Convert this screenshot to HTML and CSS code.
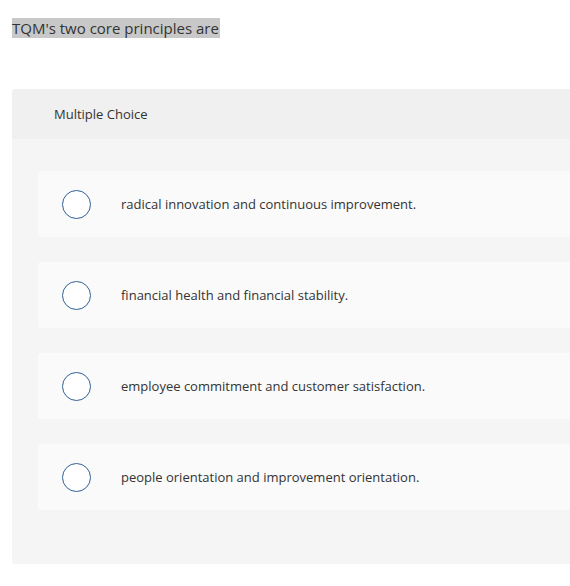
FILE: index.html
```html
<!DOCTYPE html>
<html lang="en">
<head>
    <meta charset="UTF-8">
    <meta name="viewport" content="width=device-width, initial-scale=1.0">
    <title>Multiple Choice</title>
    <link rel="stylesheet" href="styles.css">
</head>
<body>
    <div class="prompt">
        <span class="prompt-text">TQM's two core principles are</span>
    </div>

    <div class="question">
        <div class="question-header">Multiple Choice</div>
        <div class="choices">
            <label class="choice">
                <span class="radio"></span>
                <span class="choice-text">radical innovation and continuous improvement.</span>
            </label>
            <label class="choice">
                <span class="radio"></span>
                <span class="choice-text">financial health and financial stability.</span>
            </label>
            <label class="choice">
                <span class="radio"></span>
                <span class="choice-text">employee commitment and customer satisfaction.</span>
            </label>
            <label class="choice">
                <span class="radio"></span>
                <span class="choice-text">people orientation and improvement orientation.</span>
            </label>
        </div>
    </div>
</body>
</html>
```

FILE: styles.css
```css
* {
    box-sizing: border-box;
}

body {
    font-family: "Open Sans", Lato, Arial, sans-serif;
    font-variant-ligatures: none;
    color: #333;
    margin: 0;
    padding: 0;
    background-color: #fff;
}

.prompt {
    padding: 18px 0 0 12px;
    height: 89px;
    line-height: 20px;
}

.prompt-text {
    display: inline-block;
    vertical-align: top;
    background-color: #c8c8c8;
    font-size: 15px;
    line-height: 20px;
    padding-right: 1px;
}

.question {
    margin-left: 12px;
    border-radius: 3px 0 0 3px;
    overflow: hidden;
    width: calc(100% - 12px);
}

.question-header {
    background-color: #f0f0f0;
    height: 50px;
    line-height: 50px;
    padding-left: 42px;
    font-size: 13px;
}

.choices {
    background-color: #f5f5f5;
    padding: 32px 0 54px 26px;
    display: flex;
    flex-direction: column;
    gap: 25px;
}

.choice {
    display: flex;
    align-items: center;
    height: 66px;
    background-color: #fafafa;
    border-radius: 3px 0 0 3px;
    padding-left: 24px;
    cursor: pointer;
}

.radio {
    width: 29px;
    height: 29px;
    border: 1.5px solid #2f6196;
    border-radius: 50%;
    background-color: #fff;
    flex-shrink: 0;
}

.choice-text {
    margin-left: 30px;
    font-size: 13px;
}
```
